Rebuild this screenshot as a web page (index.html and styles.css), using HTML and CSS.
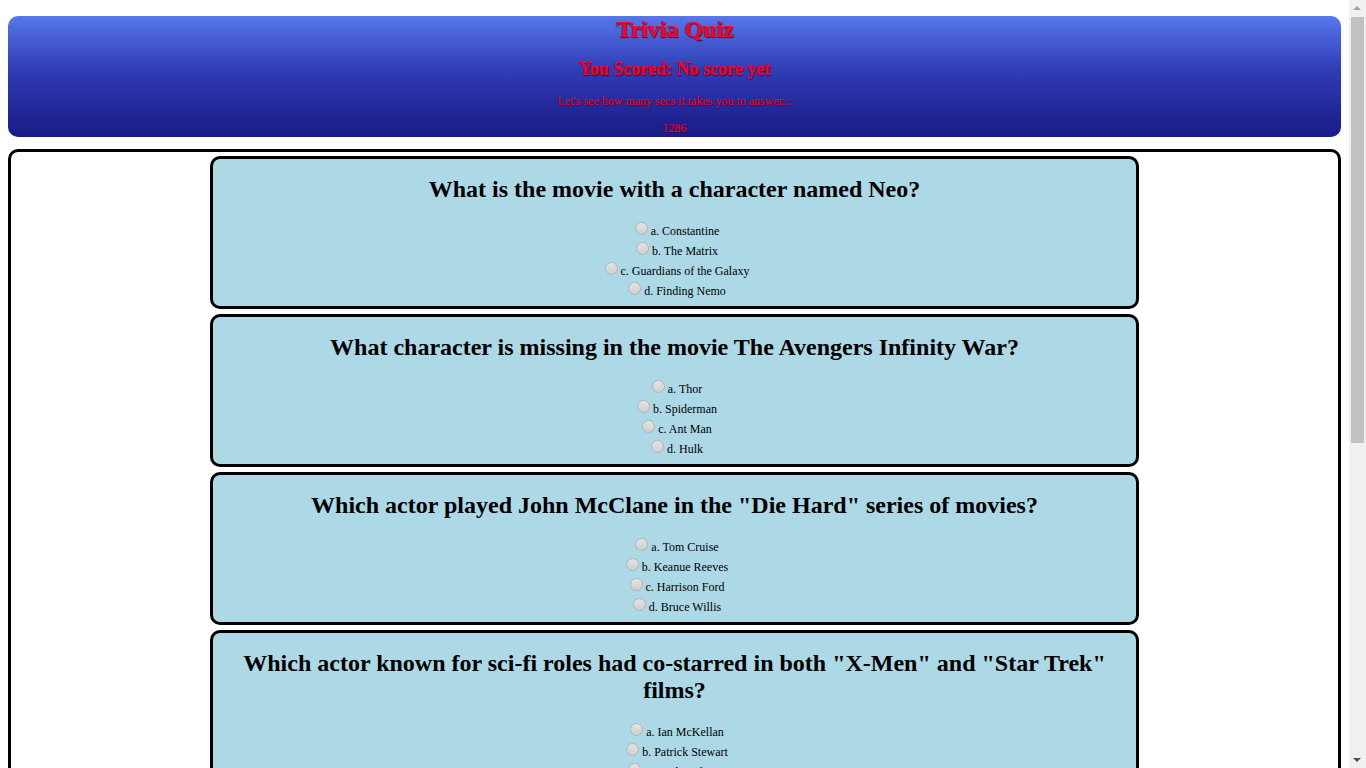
FILE: index.html
```html
<!DOCTYPE html>
<html>
<head>
<meta charset="utf-8">
<title>Trivia Quiz</title>
<link rel="stylesheet" href="styles.css">
</head>
<body>
<header class="banner">
  <h1 class="title">Trivia Quiz</h1>
  <h3 class="score">You Scored: No score yet</h3>
  <p class="note">Let's see how many secs it takes you to answer..:</p>
  <p class="note">1286</p>
</header>
<main class="quiz">
  <section class="card">
    <h2 class="question">What is the movie with a character named Neo?</h2>
    <div class="options">
      <input type="radio" name="q1" id="q1a"><label for="q1a">a. Constantine</label><br>
      <input type="radio" name="q1" id="q1b"><label for="q1b">b. The Matrix</label><br>
      <input type="radio" name="q1" id="q1c"><label for="q1c">c. Guardians of the Galaxy</label><br>
      <input type="radio" name="q1" id="q1d"><label for="q1d">d. Finding Nemo</label>
    </div>
  </section>
  <section class="card">
    <h2 class="question">What character is missing in the movie The Avengers Infinity War?</h2>
    <div class="options">
      <input type="radio" name="q2" id="q2a"><label for="q2a">a. Thor</label><br>
      <input type="radio" name="q2" id="q2b"><label for="q2b">b. Spiderman</label><br>
      <input type="radio" name="q2" id="q2c"><label for="q2c">c. Ant Man</label><br>
      <input type="radio" name="q2" id="q2d"><label for="q2d">d. Hulk</label>
    </div>
  </section>
  <section class="card">
    <h2 class="question">Which actor played John McClane in the "Die Hard" series of movies?</h2>
    <div class="options">
      <input type="radio" name="q3" id="q3a"><label for="q3a">a. Tom Cruise</label><br>
      <input type="radio" name="q3" id="q3b"><label for="q3b">b. Keanue Reeves</label><br>
      <input type="radio" name="q3" id="q3c"><label for="q3c">c. Harrison Ford</label><br>
      <input type="radio" name="q3" id="q3d"><label for="q3d">d. Bruce Willis</label>
    </div>
  </section>
  <section class="card">
    <h2 class="question">Which actor known for sci-fi roles had co-starred in both "X-Men" and "Star Trek" films?</h2>
    <div class="options">
      <input type="radio" name="q4" id="q4a"><label for="q4a">a. Ian McKellan</label><br>
      <input type="radio" name="q4" id="q4b"><label for="q4b">b. Patrick Stewart</label><br>
      <input type="radio" name="q4" id="q4c"><label for="q4c">c. Hugh Jackman</label><br>
      <input type="radio" name="q4" id="q4d"><label for="q4d">d. Halle Berry</label>
    </div>
  </section>
  <section class="card">
    <h2 class="question">Which movie won the Academy Award for Best Picture in 1998?</h2>
    <div class="options">
      <input type="radio" name="q5" id="q5a"><label for="q5a">a. Titanic</label><br>
      <input type="radio" name="q5" id="q5b"><label for="q5b">b. Good Will Hunting</label><br>
      <input type="radio" name="q5" id="q5c"><label for="q5c">c. As Good as It Gets</label><br>
      <input type="radio" name="q5" id="q5d"><label for="q5d">d. L.A. Confidential</label>
    </div>
  </section>
</main>
<div class="scrollbar" aria-hidden="true">
  <div class="arrow arrow-up"></div>
  <div class="thumb"></div>
  <div class="arrow arrow-down"></div>
</div>
</body>
</html>
```
FILE: styles.css
```css
html, body {
  font-family: "Liberation Serif", "Times New Roman", serif;
}
body {
  margin: 0;
  padding: 16px 25px 8px 8px;
  color: #000;
  background: #fff;
}
.banner {
  display: block;
  height: 121px;
  border-radius: 10px;
  background: linear-gradient(to bottom, #5777ea 0%, #2f3cb4 45%, #191a86 100%);
  text-align: center;
  color: #ff0022;
  text-shadow: 1px 1px 1px #3a0a30;
}
.title {
  margin: 0;
  font-size: 24px;
  line-height: 27px;
  font-weight: bold;
}
.score {
  margin: 16px 0 0;
  font-size: 18px;
  line-height: 21px;
  font-weight: bold;
}
.note {
  margin: 14px 0 0;
  font-size: 12px;
  line-height: 14px;
}
.note + .note {
  margin-top: 13px;
}
.quiz {
  display: block;
  margin-top: 12px;
  padding: 4px 0;
  border: 3px solid #000;
  border-radius: 10px;
}
.card {
  box-sizing: border-box;
  width: 70%;
  margin: 0 auto 5px;
  background: #add8e6;
  border: 3px solid #000;
  border-radius: 10px;
  text-align: center;
  padding: 0 0 7px;
}
.question {
  margin: 0;
  padding: 17px 20px 16px;
  font-size: 24px;
  line-height: 27px;
  font-weight: bold;
}
.options {
  font-size: 12px;
}
.options input {
  -webkit-appearance: none;
  appearance: none;
  box-sizing: border-box;
  width: 13px;
  height: 13px;
  margin: 3px 3px 0 5px;
  border: 1px solid #b4b4b4;
  border-radius: 50%;
  background: linear-gradient(to bottom, #e4e4e4, #cfcfcf);
}
.scrollbar {
  position: fixed;
  top: 0;
  right: 0;
  width: 17px;
  height: 100vh;
  background: #f1f1f1;
}
.thumb {
  position: absolute;
  top: 17px;
  left: 2px;
  width: 13px;
  height: 426px;
  background: #c1c1c1;
}
.arrow {
  position: absolute;
  left: 4px;
  width: 0;
  height: 0;
  border-left: 4px solid transparent;
  border-right: 4px solid transparent;
}
.arrow-up {
  top: 6px;
  border-bottom: 4px solid #a3a3a3;
}
.arrow-down {
  bottom: 6px;
  border-top: 4px solid #505050;
}
```
